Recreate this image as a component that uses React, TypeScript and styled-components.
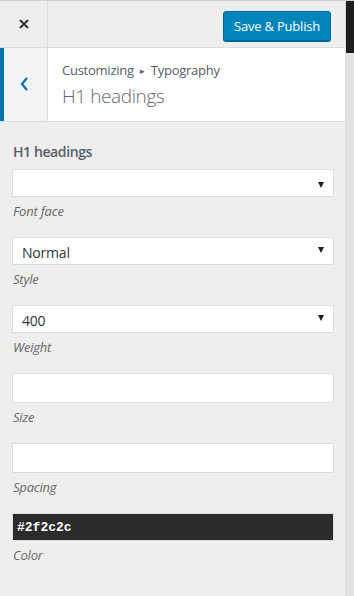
import React from 'react';
import styled, { createGlobalStyle } from 'styled-components';

const GlobalStyle = createGlobalStyle`
  html, body {
    margin: 0;
    padding: 0;
    background: #ffffff;
  }
  body {
    font-family: "Open Sans", "Noto Sans", sans-serif;
    color: #555d66;
  }
  * {
    box-sizing: border-box;
  }
`;

type Field = {
  kind: 'select' | 'input' | 'color';
  value?: string;
  description: string;
};

const fields: Field[] = [
  { kind: 'select', value: '', description: 'Font face' },
  { kind: 'select', value: 'Normal', description: 'Style' },
  { kind: 'select', value: '400', description: 'Weight' },
  { kind: 'input', description: 'Size' },
  { kind: 'input', description: 'Spacing' },
  { kind: 'color', value: '#2f2c2c', description: 'Color' },
];

function App() {
  return (
    <Page>
      <GlobalStyle />
      <Panel>
        <Header>
          <CloseButton aria-label="Close">
            <svg width="10" height="10" viewBox="0 0 10 10">
              <path d="M1 1 L9 9 M9 1 L1 9" stroke="#2c3338" strokeWidth="2" fill="none" />
            </svg>
          </CloseButton>
          <HeaderActions>
            <PublishButton>Save &amp; Publish</PublishButton>
          </HeaderActions>
        </Header>

        <SectionHead>
          <BackButton aria-label="Back">
            <svg width="9" height="14" viewBox="0 0 9 14">
              <path d="M7 1 L2 7 L7 13" stroke="#0073aa" strokeWidth="2.2" fill="none" />
            </svg>
          </BackButton>
          <SectionTitle>
            <Crumbs>
              Customizing <Arrow>▸</Arrow> Typography
            </Crumbs>
            <Title>H1 headings</Title>
          </SectionTitle>
        </SectionHead>

        <Body>
          <ControlTitle>H1 headings</ControlTitle>
          {fields.map((f) => (
            <FieldBlock key={f.description}>
              {f.kind === 'select' && (
                <SelectBox empty={!f.value}>
                  <span>{f.value}</span>
                  <Caret empty={!f.value} />
                </SelectBox>
              )}
              {f.kind === 'input' && <TextBox />}
              {f.kind === 'color' && <ColorBox>{f.value}</ColorBox>}
              <Description>{f.description}</Description>
            </FieldBlock>
          ))}
        </Body>
      </Panel>
      <Preview>
        <PreviewBar />
      </Preview>
    </Page>
  );
}

export default App;

const Page = styled.div`
  display: flex;
  width: 354px;
  height: 596px;
  overflow: hidden;
  border-top: 1px solid #cfcfcf;
`;

const Panel = styled.div`
  width: 346px;
  flex-shrink: 0;
  background: #eeeeee;
  border-right: 1px solid #dddddd;
  display: flex;
  flex-direction: column;
`;

const Header = styled.div`
  height: 47px;
  display: flex;
  border-bottom: 1px solid #dddddd;
`;

const CloseButton = styled.div`
  width: 48px;
  display: flex;
  align-items: center;
  justify-content: center;
  border-right: 1px solid #dddddd;
  padding-bottom: 1px;
`;

const HeaderActions = styled.div`
  flex: 1;
  display: flex;
  justify-content: flex-end;
  align-items: flex-start;
  padding: 10px 14px 0 0;
`;

const PublishButton = styled.button`
  width: 108px;
  height: 30px;
  background: #0085ba;
  border: 1px solid #006799;
  border-radius: 3px;
  box-shadow: 0 1px 0 #006799;
  color: #ffffff;
  font-family: "Open Sans", "Noto Sans", sans-serif;
  font-size: 13px;
  letter-spacing: -0.2px;
  padding: 0 0 1px;
`;

const SectionHead = styled.div`
  height: 74px;
  display: flex;
  background: #ffffff;
  border-bottom: 1px solid #dddddd;
`;

const BackButton = styled.div`
  width: 48px;
  background: #f3f3f5;
  border-left: 4px solid #0073aa;
  border-right: 1px solid #dddddd;
  display: flex;
  align-items: center;
  justify-content: center;
  padding: 0 3px 1px 0;
`;

const SectionTitle = styled.div`
  padding: 12px 0 0 14px;
`;

const Crumbs = styled.div`
  font-size: 13px;
  line-height: 20px;
  letter-spacing: -0.25px;
  color: #555d66;
`;

const Arrow = styled.span`
  font-size: 9px;
  margin: 0 3px;
  position: relative;
  top: -1px;
`;

const Title = styled.div`
  font-size: 19px;
  font-weight: 300;
  line-height: 28px;
  letter-spacing: -0.4px;
  color: #656a70;
`;

const Body = styled.div`
  padding: 19px 12px 0 12px;
`;

const ControlTitle = styled.div`
  font-size: 14px;
  font-weight: 600;
  line-height: 22px;
  letter-spacing: -0.4px;
  margin: 0 0 6px 1px;
  color: #555d66;
`;

const FieldBlock = styled.div`
  margin-bottom: 16px;
`;

const SelectBox = styled.div<{ empty: boolean }>`
  height: 28px;
  width: 322px;
  background: #ffffff;
  border: 1px solid #dddddd;
  display: flex;
  align-items: ${(p) => (p.empty ? 'center' : 'flex-end')};
  justify-content: space-between;
  padding: 0 8px 2px 9px;
  font-size: 14px;
  letter-spacing: -0.2px;
  color: #32373c;
  position: relative;
`;

const Caret = styled.i<{ empty: boolean }>`
  position: absolute;
  right: 9px;
  top: ${(p) => (p.empty ? '12px' : '9px')};
  width: 0;
  height: 0;
  border-left: 3px solid transparent;
  border-right: 3px solid transparent;
  border-top: 6px solid #1d1d1d;
`;

const TextBox = styled.div`
  height: 30px;
  width: 322px;
  background: #ffffff;
  border: 1px solid #dddddd;
`;

const ColorBox = styled.div`
  height: 28px;
  width: 322px;
  background: #2c2a2a;
  border: 1px solid #dddddd;
  color: #ffffff;
  font-family: "Liberation Mono", "DejaVu Sans Mono", monospace;
  font-weight: bold;
  font-size: 13px;
  display: flex;
  align-items: center;
  padding: 1px 0 0 4px;
`;

const Description = styled.div`
  font-size: 13px;
  font-style: italic;
  line-height: 20px;
  letter-spacing: -0.2px;
  color: #666666;
  padding: 4px 0 0 1px;
`;

const Preview = styled.div`
  flex: 1;
  background: #e2e2e2;
`;

const PreviewBar = styled.div`
  height: 52px;
  background: #1e1e1e;
`;
